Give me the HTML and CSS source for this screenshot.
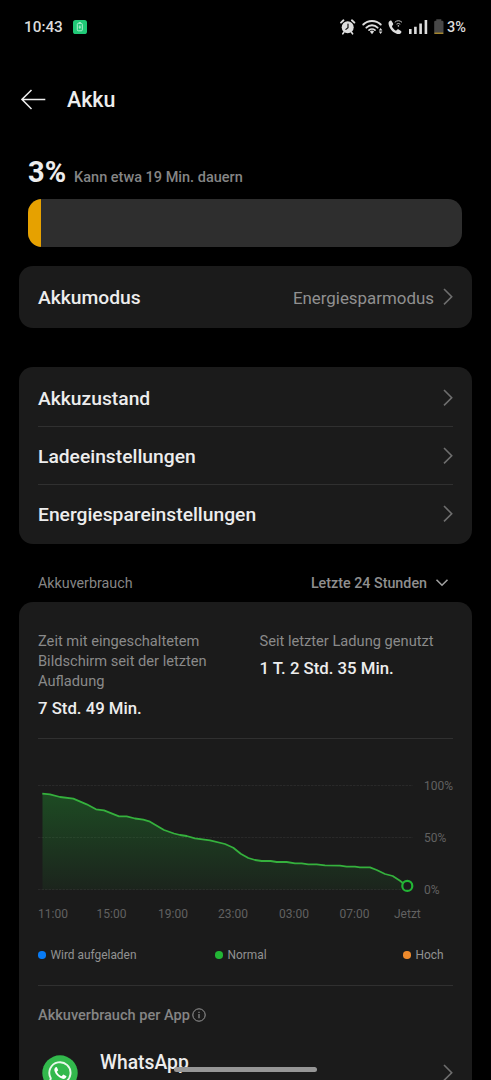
FILE: index.html
```html
<!DOCTYPE html>
<html lang="de">
<head>
<meta charset="utf-8">
<meta name="viewport" content="width=device-width, initial-scale=1">
<title>Akku</title>
<link rel="stylesheet" href="styles.css">
</head>
<body>
<svg class="defs" width="0" height="0" aria-hidden="true">
  <symbol id="chevron" viewBox="0 0 10 18"><path d="M1 1 8.700 8.700 1 16.400" fill="none" stroke="#6e6e6e" stroke-width="1.6"/></symbol>
</svg>
<div class="screen">
  <div class="status">
    <span class="clock">10:43</span>
    <svg class="saver" width="14" height="14" viewBox="0 0 14 14">
      <rect width="14" height="14" rx="2.6" fill="#20c977"/>
      <rect x="4.3" y="3.4" width="5" height="7.4" rx="1" fill="none" stroke="#b9f3d6" stroke-width=".9"/>
      <path d="M5.7 2.6h2.2M6.8 5.4v3.4M5.600 7.1h2.4" stroke="#b9f3d6" stroke-width=".9"/>
    </svg>
    <svg class="indicators" width="107" height="20" viewBox="338 17 107 20">
      <g stroke="#dedede" fill="none" stroke-linecap="round">
        <circle cx="347.7" cy="27.2" r="6" fill="#dedede" stroke="none"/>
        <path d="M341 22.6 343.5 20.3M354.4 22.6 351.9 20.3" stroke-width="1.9"/>
        <path d="M343.9 32.2 342.8 33.8M351.5 32.2 352.6 33.8" stroke-width="1.6"/>
        <path d="M348 24v3.6l-2.1 1.8" stroke="#111" stroke-width="1.2"/>
        <path d="M363.3 24.5a12.3 12.3 0 0 1 17.4 0" stroke-width="2"/>
        <path d="M366.4 27.6a8 8 0 0 1 11.2 0" stroke-width="2"/>
        <path d="M369 30.2a4.4 4.4 0 0 1 6 0" stroke-width="1.7"/>
      </g>
      <path d="M369.9 31.6a3 3 0 0 1 4.2 0L372 34.3Z" fill="#dedede"/>
      <path d="m380.6 27.9 1.8 2.5h-3.6ZM380.6 34.1l1.8-2.5h-3.6Z" fill="#dedede"/>
      <path d="M390 20.8c-1.4.7-1.7 2.2-1.3 4 1 4.4 4.4 8 8.5 9.1 1.8.5 3.3.1 4.1-1.4.3-.5.2-1-.3-1.4l-2.3-1.7c-.5-.3-1-.3-1.4.1l-1.3 1.2c-1.9-.9-3.3-2.6-4.1-4.5l1.1-1.4c.3-.4.3-.9.1-1.3l-1.5-2.5c-.3-.5-1-.6-1.6-.2Z" fill="#dedede"/>
      <path d="M394.800 22.300a5.400 5.400 0 0 1 7.200 0M396.500 24.200a3.100 3.100 0 0 1 3.800 0" fill="none" stroke="#bdbdbd" stroke-width="1"/>
      <circle cx="398.400" cy="25.900" r=".8" fill="#bdbdbd"/>
      <path d="M409 29h2.600v5H409ZM414.100 26.700h2.600V34h-2.600ZM419.300 23.400h2.600V34h-2.600ZM424.600 20h2.600v14h-2.600Z" fill="#dedede"/>
      <path d="M436.300 19.200h5v1.500h1a1.200 1.200 0 0 1 1.200 1.200V34h-9.300V21.900a1.200 1.200 0 0 1 1.200-1.200h.9Z" fill="#474747"/>
      <path d="M434.500 33.200h8.700" stroke="#c59a22" stroke-width="1.100"/>
    </svg>
    <span class="charge">3%</span>
  </div>

  <header class="header">
    <svg width="26" height="22" viewBox="0 0 26 22"><path d="M10.500 1 .9 10.400l9.600 9.600M.9 10.400h23.400" fill="none" stroke="#eee" stroke-width="1.500"/></svg>
    <h1 class="title">Akku</h1>
  </header>

  <div class="summary">
    <span class="level">3%</span>
    <span class="estimate">Kann etwa 19 Min. dauern</span>
  </div>
  <div class="meter"><div class="meter-fill" style="width:3.1%"></div></div>

  <div class="card mode">
    <span class="label">Akkumodus</span>
    <span class="value">Energiesparmodus</span>
    <svg class="chev"><use href="#chevron"/></svg>
  </div>

  <div class="card list">
    <div class="row"><span class="label">Akkuzustand</span><svg class="chev"><use href="#chevron"/></svg></div>
    <div class="row"><span class="label">Ladeeinstellungen</span><svg class="chev"><use href="#chevron"/></svg></div>
    <div class="row"><span class="label">Energiespareinstellungen</span><svg class="chev"><use href="#chevron"/></svg></div>
  </div>

  <div class="section">
    <span class="section-name">Akkuverbrauch</span>
    <span class="range">Letzte 24 Stunden</span>
    <svg width="14" height="10" viewBox="0 0 14 10"><path d="M1.500 1.700 7 7.200l5.500-5.500" fill="none" stroke="#a0a0a0" stroke-width="1.600"/></svg>
  </div>

  <div class="card usage">
    <div class="stats">
      <div class="stat">
        <div class="stat-name">Zeit mit eingeschaltetem<br>Bildschirm seit der letzten<br>Aufladung</div>
        <div class="stat-value">7 Std. 49 Min.</div>
      </div>
      <div class="stat">
        <div class="stat-name">Seit letzter Ladung genutzt</div>
        <div class="stat-value">1 T. 2 Std. 35 Min.</div>
      </div>
    </div>

    <div class="chart">
      <svg width="376" height="120" viewBox="38 778 376 120">
        <defs>
          <linearGradient id="area" x1="0" y1="0" x2="0" y2="1">
            <stop offset="0" stop-color="#22b535" stop-opacity=".31"/>
            <stop offset="1" stop-color="#22b535" stop-opacity=".06"/>
          </linearGradient>
        </defs>
        <path d="M38 785.500h375M38 837.500h375M38 889.500h375" stroke="#292929" stroke-dasharray="2.500 1"/>
        <path d="M42.500 793.700 50 794.300 60 797 73.300 798.700 86.700 804.300 96 809.300 104 810.300 119 816.300H126.700L135 818.500 143.300 819.700 150 821.700 164 830 174 833.500 180 835 186.700 836 195 838.300 210 840.300 225 844 233.300 847.700 240.700 853.700 248.300 858 255 860 261.700 861H270.700L276.700 862H286.700L295 863.300H301.700L308.300 864.300H316.700L325 865.300 340 865.700 346.700 866.600H355L360 867.300H370L376.700 870 385 874 392.700 876 400 880.700 407 886V889.500H42.500Z" fill="url(#area)"/>
        <path d="M42.300 793.700 50 794.300 60 797 73.300 798.700 86.700 804.300 96 809.300 104 810.300 119 816.300H126.700L135 818.500 143.300 819.700 150 821.700 164 830 174 833.500 180 835 186.700 836 195 838.300 210 840.300 225 844 233.300 847.700 240.700 853.700 248.300 858 255 860 261.700 861H270.700L276.700 862H286.700L295 863.300H301.700L308.300 864.300H316.700L325 865.300 340 865.700 346.700 866.600H355L360 867.300H370L376.700 870 385 874 392.700 876 400 880.700 404 884" fill="none" stroke="#35b13d" stroke-width="1.800" stroke-linejoin="round"/>
        <circle cx="407.300" cy="885.900" r="5" fill="#1b1b1b" stroke="#22b535" stroke-width="2.200"/>
      </svg>
      <div class="percents"><span>100%</span><span>50%</span><span>0%</span></div>
    </div>
    <div class="hours"><span>11:00</span><span>15:00</span><span>19:00</span><span>23:00</span><span>03:00</span><span>07:00</span><span>Jetzt</span></div>
    <div class="legend">
      <span class="key"><i class="dot blue"></i>Wird aufgeladen</span>
      <span class="key"><i class="dot green"></i>Normal</span>
      <span class="key"><i class="dot orange"></i>Hoch</span>
    </div>

    <div class="apps-head">
      <span>Akkuverbrauch per App</span>
      <svg width="14" height="14" viewBox="0 0 14 14"><circle cx="7" cy="7" r="6.200" fill="none" stroke="#999" stroke-width="1"/><path d="M7 6v4.200M7 3.700v1.200" stroke="#999" stroke-width="1.100"/></svg>
    </div>
    <div class="app">
      <svg width="36" height="36" viewBox="0 0 36 36">
        <circle cx="18" cy="18" r="17.700" fill="#32b94c"/>
        <path d="m7.300 28.700 1.500-5.500a10.600 10.600 0 1 1 4.200 4Z" fill="none" stroke="#e8f8ea" stroke-width="1.900" stroke-linejoin="round"/>
        <path d="M14 12.100c-1.500.8-2 2.300-1.500 4 1.300 3.900 4.100 6.500 8 7.700 1.900.4 3.700-.6 4-2.500l-3.200-1.700-1.700 1.700c-2.200-.8-3.800-2.300-4.700-4.500l1.300-1.600-1.300-3Z" fill="#fff"/>
      </svg>
      <span class="app-name">WhatsApp</span>
      <svg class="chev"><use href="#chevron"/></svg>
    </div>
  </div>
  <div class="home-bar"></div>
</div>
</body>
</html>
```
FILE: styles.css
```css
* { box-sizing: border-box; }
body { margin: 0; background: #000; }
.defs { position: absolute; }
.screen {
  position: relative;
  height: 1080px;
  overflow: hidden;
  padding: 0 19px;
  background: #000;
  color: #ededed;
  font-family: Roboto, "Liberation Sans", sans-serif;
}
svg { display: block; flex: none; }
span { white-space: nowrap; }

.status { display: flex; align-items: center; height: 54px; padding: 0 4px 0 5px; }
.clock { width: 49px; font-size: 15.3px; font-weight: 500; color: #dcdcdc; }
.indicators { margin-left: auto; }
.charge { width: 21px; margin-left: 2px; font-size: 14.5px; font-weight: 500; color: #dcdcdc; }

.header { display: flex; align-items: center; gap: 20px; height: 91px; padding-left: 2px; }
.title { margin: 0; padding-top: 1px; font-size: 21.4px; line-height: 28px; font-weight: 500; }

.summary { display: flex; align-items: flex-start; gap: 8px; height: 54px; padding: 9px 0 0 9px; }
.level { font-size: 29px; line-height: 36px; font-weight: 700; }
.estimate { margin-top: 14px; font-size: 14.5px; line-height: 20px; font-weight: 500; color: #858585; }
.meter { height: 48px; margin: 0 10px 0 9px; border-radius: 14px; background: #2e2e2e; overflow: hidden; }
.meter-fill { height: 100%; background: #e6a100; }

.card { border-radius: 14px; background: #1b1b1b; padding: 0 19px; }
.label { padding-top: 2px; font-size: 19.25px; line-height: 24px; font-weight: 500; }
.chev { width: 10px; height: 18px; }
.mode { display: flex; align-items: center; height: 62px; margin-top: 19px; }
.value { margin: 2px 9px 0 auto; font-size: 16.9px; line-height: 21px; color: #909090; }

.list { margin-top: 39px; height: 177px; }
.row { display: flex; align-items: center; justify-content: space-between; height: 58px; border-bottom: 1px solid #303030; }
.row:first-child { height: 60px; padding-top: 3px; }
.row:last-child { border-bottom: 0; }

.section { display: flex; align-items: center; height: 58px; padding: 20px 23px 0 19px; font-size: 14.3px; color: #868686; }
.range { margin: 0 8px 0 auto; font-weight: 500; color: #8f8f8f; }

.usage { height: 520px; padding-top: 29px; }
.stats { display: grid; grid-template-columns: 221.5px 1fr; height: 108px; border-bottom: 1px solid #303030; }
.stat-name { font-size: 14.65px; line-height: 20px; color: #8a8a8a; white-space: nowrap; }
.stat-value { margin-top: 7px; font-size: 16.75px; line-height: 20px; font-weight: 500; }

.chart { display: flex; gap: 10px; margin-top: 39px; }
.percents { display: flex; flex-direction: column; justify-content: space-between; height: 120px; font-size: 12px; line-height: 16px; color: #616161; }
.hours { display: grid; grid-template-columns: 58.5px 61.5px 60px 61px 60.5px 54.5px 1fr; margin-top: 8px; font-size: 12px; line-height: 16px; color: #616161; }
.legend { display: grid; grid-template-columns: 177px 188px 1fr; margin-top: 25px; font-size: 11.9px; line-height: 16px; color: #929292; }
.key { display: flex; align-items: center; gap: 5px; }
.dot { width: 7.5px; height: 7.5px; border-radius: 50%; }
.blue { background: #087bf5; }
.green { background: #22b535; }
.orange { background: #ee8a2c; }

.apps-head { display: flex; align-items: center; gap: 2px; height: 59px; margin-top: 22px; border-top: 1px solid #303030; font-size: 14.55px; font-weight: 500; color: #858585; }
.app { display: flex; align-items: center; margin-top: 7px; padding-left: 4px; }
.app-name { margin: 0 auto 20px 22px; font-size: 19.3px; line-height: 24px; font-weight: 500; }
.home-bar { position: absolute; left: 174px; top: 1067px; width: 143px; height: 5px; border-radius: 3px; background: #969696; }
```
